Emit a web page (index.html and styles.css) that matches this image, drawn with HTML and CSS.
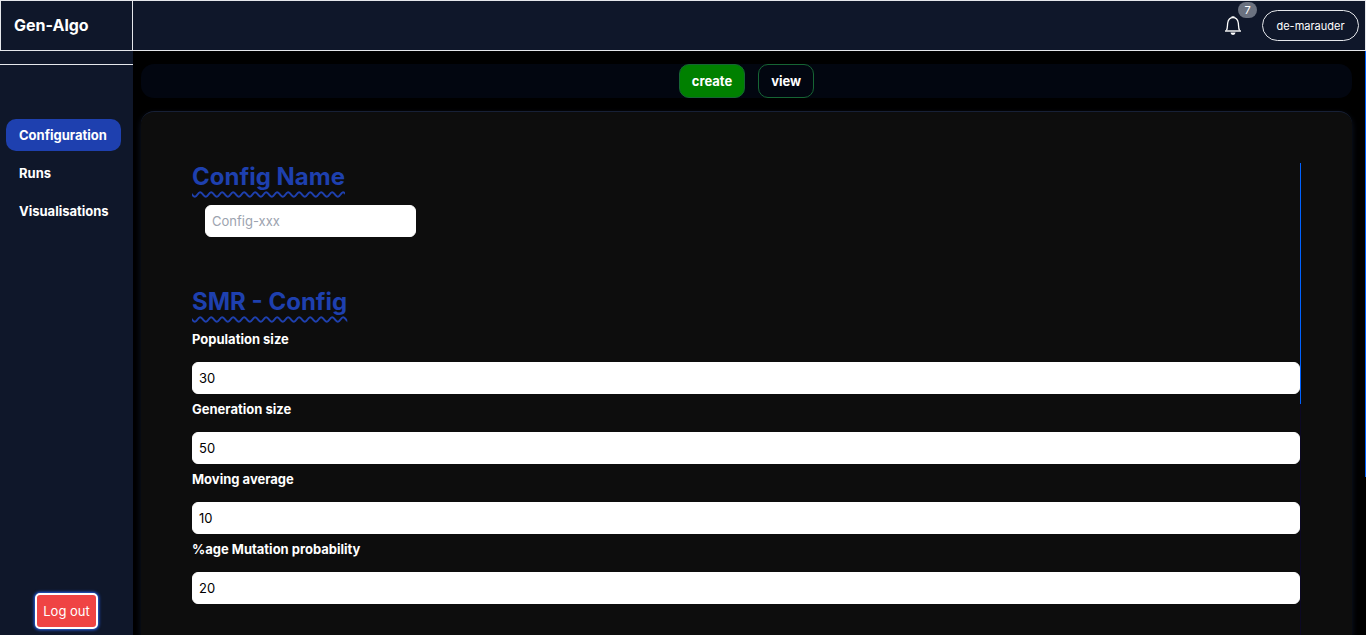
FILE: index.html
```html
<!DOCTYPE html>
<html lang="en">
<head>
<meta charset="utf-8">
<meta name="viewport" content="width=device-width, initial-scale=1">
<title>Gen-Algo</title>
<link rel="stylesheet" href="styles.css">
</head>
<body>
<header class="topbar">
  <h1 class="brand">Gen-Algo</h1>
  <div class="account">
    <button class="bell" type="button" aria-label="Notifications">
      <svg class="bell-icon" viewBox="0 0 18 20" fill="none" stroke="currentColor">
        <path d="M2.500 14.500C3.700 12 3.300 9.500 3.700 7C4.200 3.500 6 1.700 9 1.700C12 1.700 13.800 3.500 14.300 7C14.700 9.500 14.300 12 15.500 14.500" stroke-width="1.300" stroke-linejoin="round"/>
        <path d="M1 15h16" stroke-width="1.400"/>
        <path d="M7.500 1h3" stroke-width="1.400"/>
        <path d="M6.500 16.500h5a2.500 2.500 0 0 1-5 0z" fill="currentColor" stroke="none"/>
      </svg>
      <span class="badge">7</span>
    </button>
    <button class="user" type="button">de-marauder</button>
  </div>
</header>
<div class="shell">
  <aside class="sidebar">
    <nav class="nav">
      <a class="nav-link active" href="#configuration">Configuration</a>
      <a class="nav-link" href="#runs">Runs</a>
      <a class="nav-link" href="#visualisations">Visualisations</a>
    </nav>
    <button class="logout" type="button">Log out</button>
  </aside>
  <main class="main">
    <div class="tabs">
      <button class="tab selected" type="button">create</button>
      <button class="tab" type="button">view</button>
    </div>
    <section class="card">
      <form class="form">
        <section class="group">
          <h2 class="heading"><label for="name">Config Name</label></h2>
          <input class="input name" id="name" type="text" placeholder="Config-xxx">
        </section>
        <section class="group">
          <h2 class="heading">SMR - Config</h2>
          <div class="field"><label for="population">Population size</label><input class="input" id="population" type="text" value="30"></div>
          <div class="field"><label for="generation">Generation size</label><input class="input" id="generation" type="text" value="50"></div>
          <div class="field"><label for="average">Moving average</label><input class="input" id="average" type="text" value="10"></div>
          <div class="field"><label for="mutation">%age Mutation probability</label><input class="input" id="mutation" type="text" value="20"></div>
        </section>
      </form>
      <div class="rail"><div class="thumb"></div></div>
    </section>
  </main>
  <div class="rail page-rail"><div class="thumb"></div></div>
</div>
</body>
</html>
```

FILE: styles.css
```css
* { box-sizing: border-box; }

body {
  display: flex;
  flex-direction: column;
  height: 100vh;
  margin: 0;
  overflow: hidden;
  background: #000;
  color: #fff;
  font: 13px/20px Inter, "Liberation Sans", sans-serif;
}

h1, h2 { margin: 0; }
button, input { font: inherit; }
button { cursor: pointer; }

.topbar {
  display: flex;
  flex: none;
  justify-content: space-between;
  height: 51px;
  border: 1px solid #e5e7eb;
  background: #0f172a;
}

.brand {
  width: 132px;
  padding: 0 13px;
  border-right: 1px solid #e5e7eb;
  font-size: 16px;
  font-weight: 700;
  line-height: 48px;
}

.account {
  display: flex;
  align-items: center;
  gap: 20px;
  padding-right: 6px;
}

.bell {
  position: relative;
  width: 18px;
  height: 20px;
  padding: 0;
  border: 0;
  background: none;
  color: #fff;
}

.bell-icon {
  display: block;
  width: 18px;
  height: 20px;
}

.badge {
  position: absolute;
  top: -14px;
  left: 14px;
  width: 19px;
  border-radius: 8px;
  background: #6b7280;
  font-size: 11px;
  line-height: 16px;
  text-align: center;
}

.user {
  min-width: 97px;
  height: 31px;
  padding: 0 12px;
  border: 1px solid #e5e7eb;
  border-radius: 16px;
  background: none;
  color: #fff;
  font-size: 11px;
}

.shell {
  display: flex;
  flex: 1;
  min-height: 0;
}

.sidebar {
  display: flex;
  flex: none;
  flex-direction: column;
  align-items: center;
  justify-content: space-between;
  width: 133px;
  padding: 13px 0 6px;
  background: #0f172a;
}

.nav {
  display: flex;
  flex-direction: column;
  align-items: flex-start;
  gap: 6px;
  width: 100%;
  padding: 54px 6px 0;
  border-top: 1px solid #e5e7eb;
}

.nav-link {
  width: 115px;
  padding: 6px 13px;
  border-radius: 10px;
  color: #fff;
  font-weight: 700;
  text-decoration: none;
}

.nav-link.active { background: #1e40af; }

.logout {
  height: 36px;
  padding: 0 6px;
  border: 2px solid #fff;
  border-radius: 5px;
  background: #ef4444;
  box-shadow: 0 0 3px 1px #2563eb;
  color: #fff;
}

.main {
  display: flex;
  flex: 1;
  flex-direction: column;
  gap: 13px;
  min-width: 0;
  padding: 13px 13px 0 8px;
}

.tabs {
  display: flex;
  flex: none;
  justify-content: center;
  gap: 13px;
  border-radius: 13px;
  background: #020610;
}

.tab {
  height: 34px;
  padding: 0 12px;
  border: 1px solid #166534;
  border-radius: 10px;
  background: none;
  color: #fff;
  font-weight: 700;
}

.tab.selected { background: #008000; }

.card {
  display: flex;
  flex: 1;
  min-height: 0;
  padding: 51px 51px 0;
  border-top: 1px solid #172036;
  border-radius: 13px 13px 0 0;
  background: #0d0d0d;
  box-shadow: 0 3px 6px #0f172a;
}

.form {
  display: flex;
  flex: 1;
  flex-direction: column;
  gap: 51px;
  min-width: 0;
}

.heading {
  margin-bottom: 13px;
  color: #1e40af;
  font-size: 24px;
  font-weight: 700;
  line-height: 28px;
  text-decoration: underline wavy 2px #1e40af;
  text-decoration-skip-ink: none;
  text-underline-offset: 6px;
}

.input {
  display: block;
  width: 100%;
  height: 32px;
  padding: 0 6px;
  border: 1px solid #fff;
  border-radius: 6px;
  background: #fff;
  color: #000;
}

.input::placeholder { color: #9ca3af; }

.name {
  width: 211px;
  margin-top: 14px;
  margin-left: 13px;
}

.field {
  display: flex;
  flex-direction: column;
  gap: 13px;
  margin-bottom: 5px;
  font-weight: 700;
}

.field .input { font-weight: 400; }

.rail {
  flex: none;
  width: 1px;
  background: #0c0824;
}

.thumb {
  height: 51%;
  background: #0062ff;
}

.page-rail { background: #000; }
.page-rail .thumb { height: 73%; }
```
